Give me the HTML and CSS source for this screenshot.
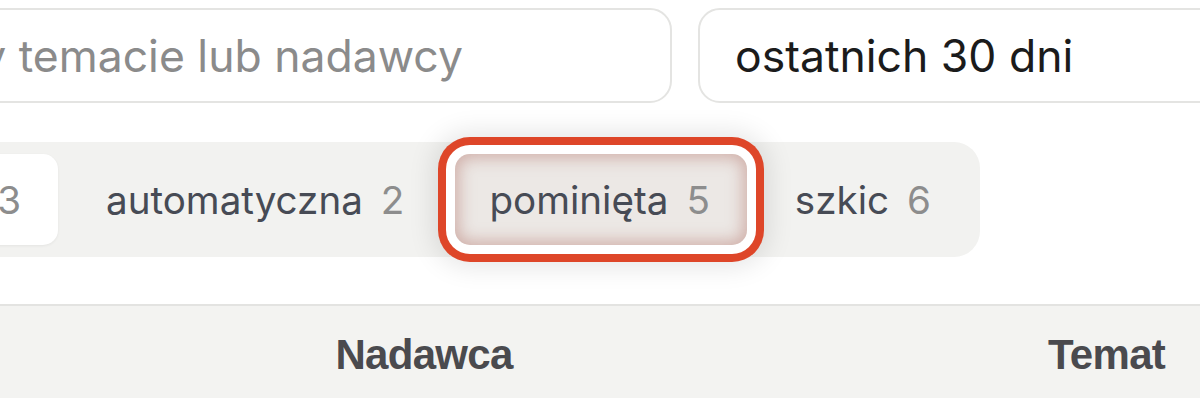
FILE: index.html
```html
<!DOCTYPE html>
<html lang="pl">
<head>
<meta charset="utf-8">
<title>Wiadomości</title>
<link rel="stylesheet" href="styles.css">
</head>
<body>
<div class="page">
  <div class="filters">
    <input class="field search" type="text" placeholder="Szukaj w treści czy temacie lub nadawcy">
    <div class="field date">ostatnich 30 dni</div>
  </div>

  <div class="tabs-row">
    <div class="tabs">
      <button class="tab active"><span class="label">wysłana</span><span class="count">3</span></button>
      <button class="tab"><span class="label">automatyczna</span><span class="count">2</span></button>
      <button class="tab highlighted"><span class="label">pominięta</span><span class="count">5</span></button>
      <button class="tab"><span class="label">szkic</span><span class="count">6</span></button>
    </div>
  </div>

  <div class="table-head">
    <div class="th sender">Nadawca</div>
    <div class="th subject">Temat</div>
  </div>
</div>
</body>
</html>
```

FILE: styles.css
```css
* { box-sizing: border-box; }

html, body {
  margin: 0;
  padding: 0;
  background: #ffffff;
}

body {
  width: 1200px;
  height: 398px;
  overflow: hidden;
  font-family: "Inter", "Noto Sans", sans-serif;
}

.page {
  display: flex;
  flex-direction: column;
}

.filters {
  display: flex;
  gap: 26px;
  margin-left: -600px;
  padding-top: 8px;
}

.field {
  height: 95px;
  border: 2px solid #e4e4e2;
  border-radius: 22px;
  background: #fff;
  font-family: "Inter", sans-serif;
  font-size: 44.5px;
  color: #1b1b1b;
  display: flex;
  align-items: center;
  outline: none;
}

.search {
  width: 1272px;
  flex: none;
  padding: 0 0 0 200px;
}

.search::placeholder {
  color: #8b8b8b;
}

.date {
  width: 600px;
  flex: none;
  padding-left: 35px;
}

.tabs-row {
  width: 980px;
  display: flex;
  justify-content: flex-end;
  margin-top: 39px;
}

.tabs {
  flex: none;
  display: flex;
  gap: 14px;
  padding: 12px;
  background: #f2f2f0;
  border-radius: 26px;
}

.tab {
  height: 91px;
  padding: 0 37px 0 34px;
  border: none;
  border-radius: 15px;
  background: transparent;
  display: flex;
  align-items: center;
  gap: 18px;
  font-family: "Inter", sans-serif;
  font-size: 38.6px;
  color: #474b55;
  cursor: pointer;
}

.tab .count {
  color: #8d8d8d;
}

.tab.active {
  background: #ffffff;
  box-shadow: 0 1px 3px rgba(0, 0, 0, 0.06);
}

.tab.highlighted {
  position: relative;
  background: #ece8e5;
  box-shadow:
    inset 0 0 16px 4px rgba(185, 130, 120, 0.55),
    0 0 0 9px #ffffff,
    0 0 0 17px #de4629,
    0 0 26px 22px rgba(0, 0, 0, 0.10);
}

.table-head {
  margin-top: 47px;
  border-top: 2px solid #e3e3e1;
  background: #f3f3f1;
  height: 200px;
  display: grid;
  grid-template-columns: 848px 1fr;
  align-items: start;
}

.th {
  padding-top: 24px;
  font-family: "Liberation Sans", Arial, sans-serif;
  font-weight: 700;
  font-size: 42px;
  line-height: 50px;
  letter-spacing: -0.7px;
  color: #4a4a4e;
}

.th.sender {
  text-align: center;
}

.th.subject {
  padding-left: 200px;
}
```
